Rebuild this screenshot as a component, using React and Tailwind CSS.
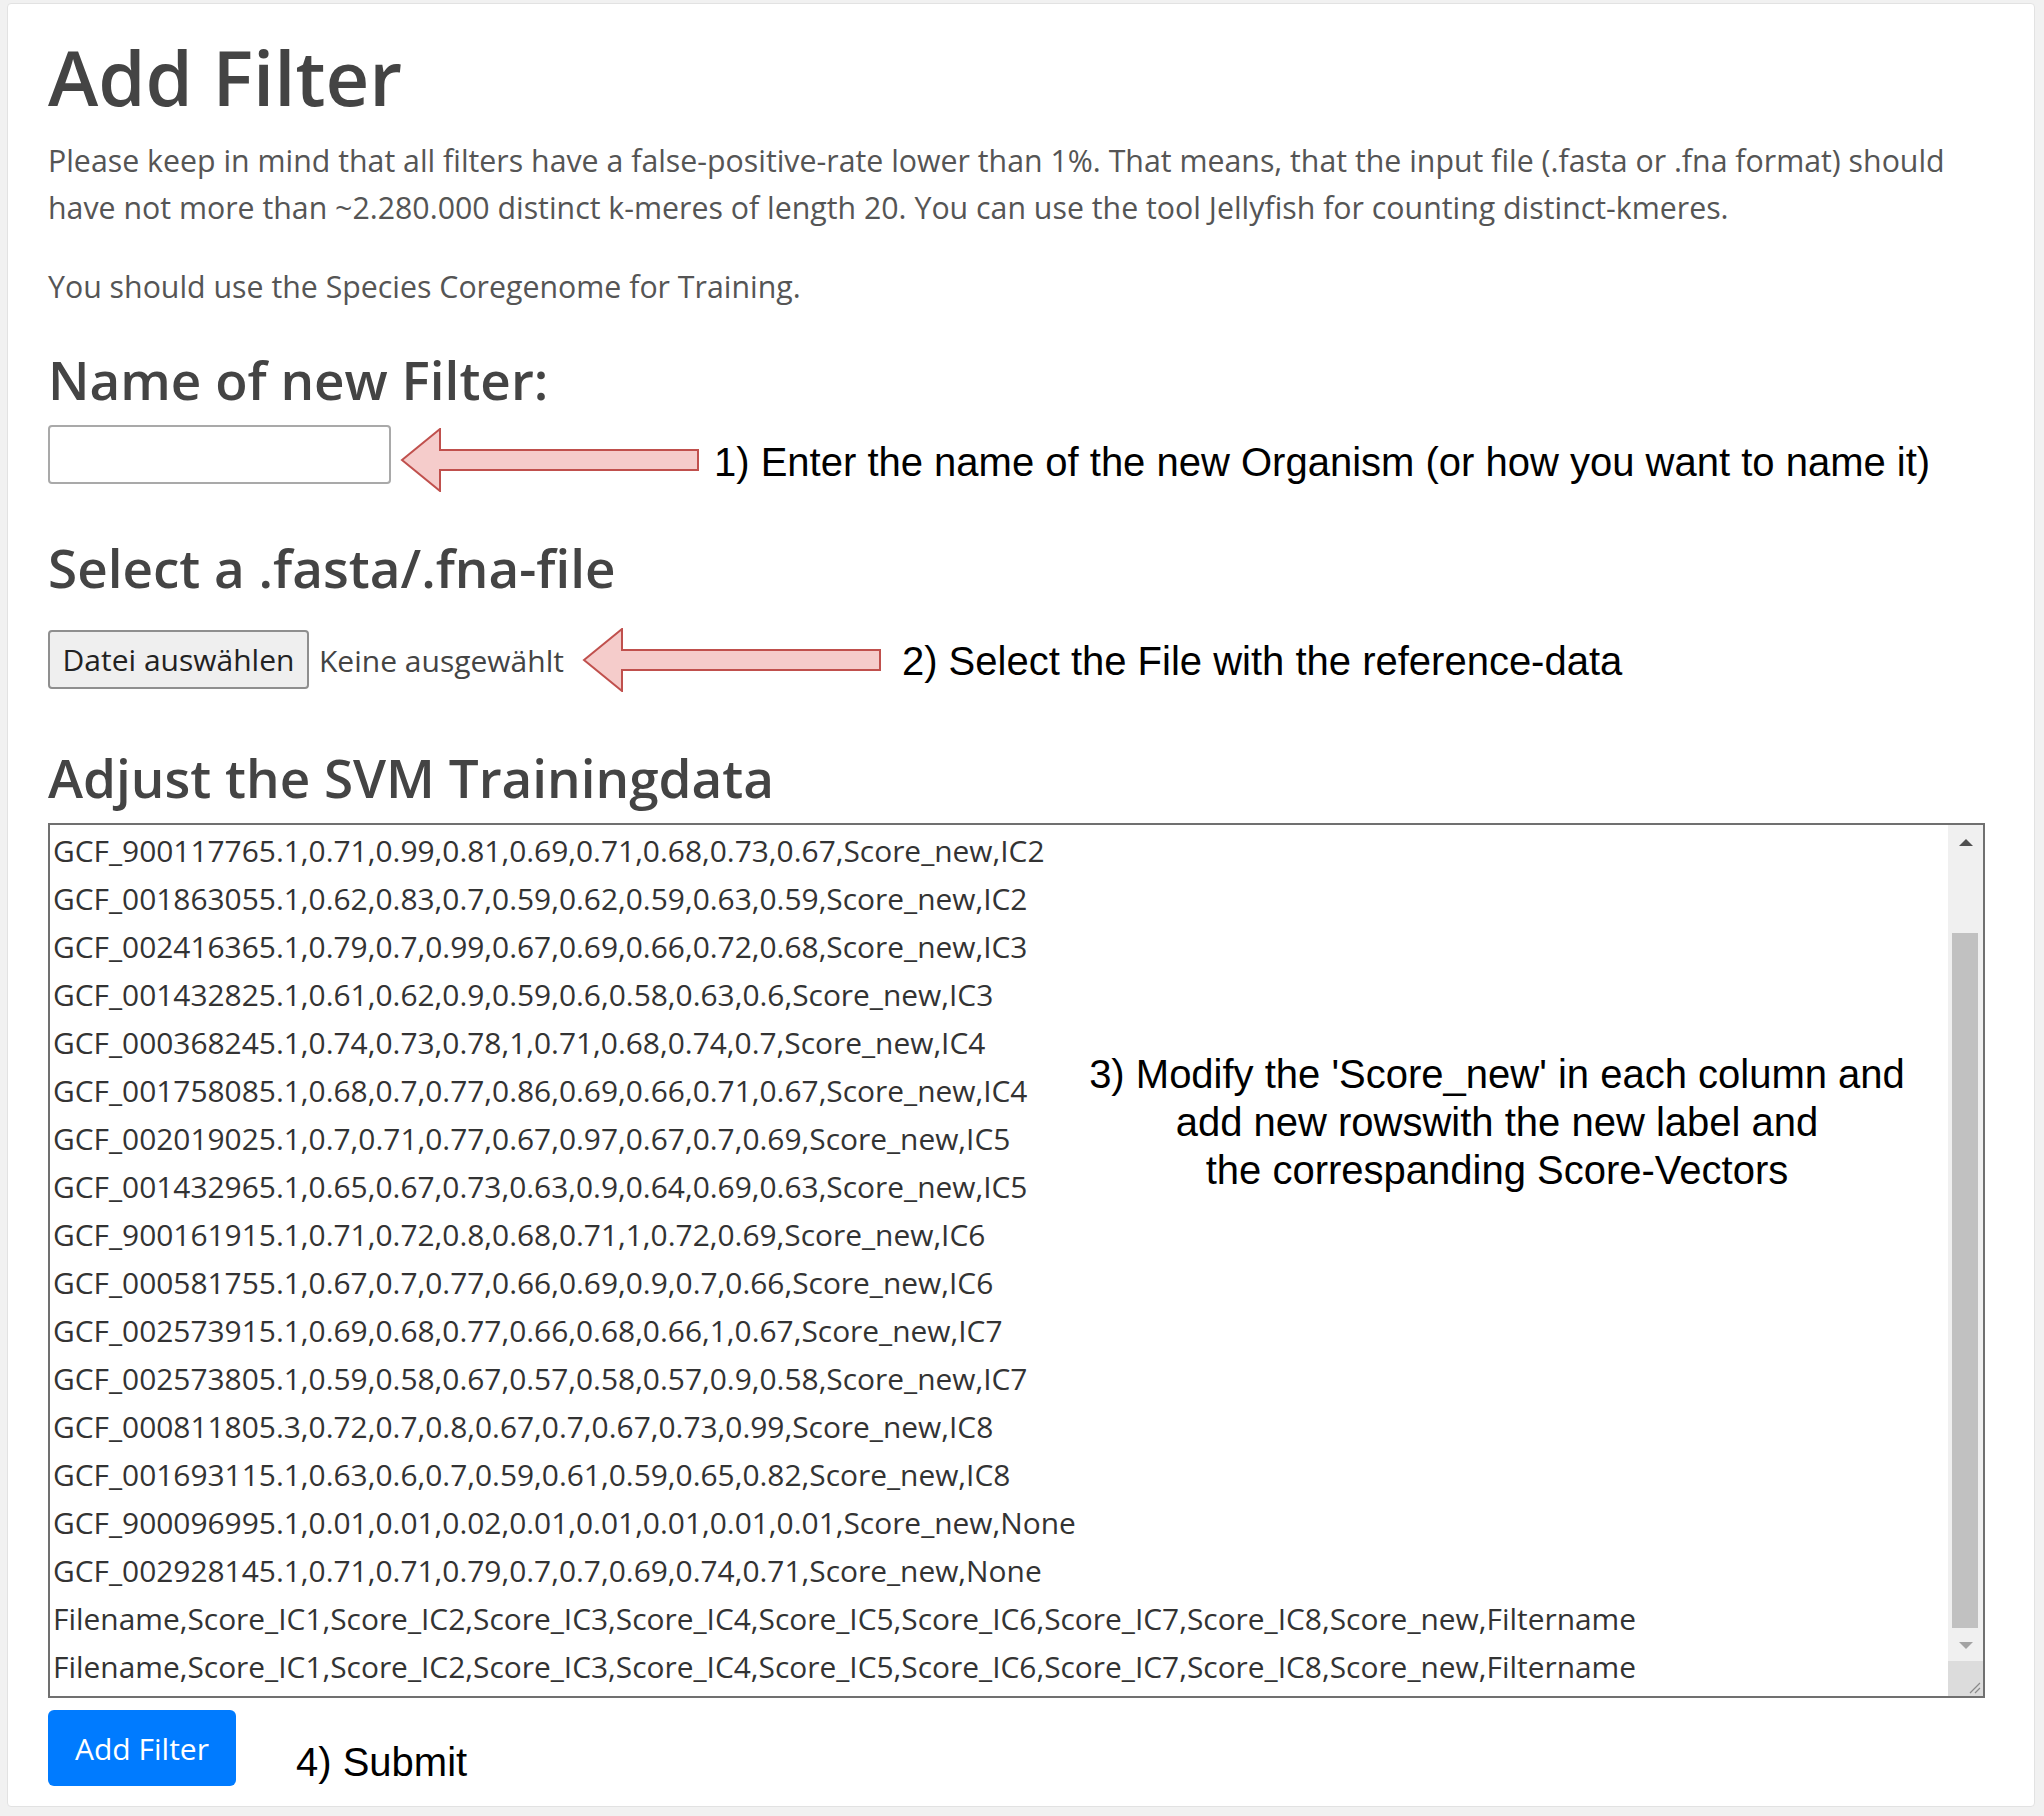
import React from 'react';

const rows = [
  'GCF_900117765.1,0.71,0.99,0.81,0.69,0.71,0.68,0.73,0.67,Score_new,IC2',
  'GCF_001863055.1,0.62,0.83,0.7,0.59,0.62,0.59,0.63,0.59,Score_new,IC2',
  'GCF_002416365.1,0.79,0.7,0.99,0.67,0.69,0.66,0.72,0.68,Score_new,IC3',
  'GCF_001432825.1,0.61,0.62,0.9,0.59,0.6,0.58,0.63,0.6,Score_new,IC3',
  'GCF_000368245.1,0.74,0.73,0.78,1,0.71,0.68,0.74,0.7,Score_new,IC4',
  'GCF_001758085.1,0.68,0.7,0.77,0.86,0.69,0.66,0.71,0.67,Score_new,IC4',
  'GCF_002019025.1,0.7,0.71,0.77,0.67,0.97,0.67,0.7,0.69,Score_new,IC5',
  'GCF_001432965.1,0.65,0.67,0.73,0.63,0.9,0.64,0.69,0.63,Score_new,IC5',
  'GCF_900161915.1,0.71,0.72,0.8,0.68,0.71,1,0.72,0.69,Score_new,IC6',
  'GCF_000581755.1,0.67,0.7,0.77,0.66,0.69,0.9,0.7,0.66,Score_new,IC6',
  'GCF_002573915.1,0.69,0.68,0.77,0.66,0.68,0.66,1,0.67,Score_new,IC7',
  'GCF_002573805.1,0.59,0.58,0.67,0.57,0.58,0.57,0.9,0.58,Score_new,IC7',
  'GCF_000811805.3,0.72,0.7,0.8,0.67,0.7,0.67,0.73,0.99,Score_new,IC8',
  'GCF_001693115.1,0.63,0.6,0.7,0.59,0.61,0.59,0.65,0.82,Score_new,IC8',
  'GCF_900096995.1,0.01,0.01,0.02,0.01,0.01,0.01,0.01,0.01,Score_new,None',
  'GCF_002928145.1,0.71,0.71,0.79,0.7,0.7,0.69,0.74,0.71,Score_new,None',
  'Filename,Score_IC1,Score_IC2,Score_IC3,Score_IC4,Score_IC5,Score_IC6,Score_IC7,Score_IC8,Score_new,Filtername',
  'Filename,Score_IC1,Score_IC2,Score_IC3,Score_IC4,Score_IC5,Score_IC6,Score_IC7,Score_IC8,Score_new,Filtername',
];

const ui = { fontFamily: '"Open Sans", "Noto Sans", sans-serif' };
const note = { fontFamily: '"Liberation Sans", Arial, sans-serif' };

// pink block arrow pointing left
const Arrow = () => (
  <svg width="300" height="64" viewBox="0 0 300 64" className="shrink-0">
    <polygon
      points="2,32 40,1 40,22 298,22 298,42 40,42 40,63"
      fill="#f5cccb"
      stroke="#c0504d"
      strokeWidth="2"
      strokeLinejoin="miter"
    />
  </svg>
);

const Note = ({ children, className = '' }) => (
  <span style={note} className={`text-[40px] leading-[46px] text-black whitespace-nowrap ${className}`}>
    {children}
  </span>
);

export default function App() {
  return (
    <div className="min-h-screen bg-[#f1f1f1] pt-[3px] pl-[7px] pr-[9px] pb-[9px]" style={ui}>
      <div className="h-[1804px] bg-white border border-[#e2e2e2] rounded-[4px] pl-[40px] pr-[48px]">
        <h1 className="mt-[26px] text-[76px] leading-[94px] font-semibold text-[#444]">Add Filter</h1>

        <p className="mt-[13px] text-[30.3px] leading-[47px] text-[#555] whitespace-nowrap">
          Please keep in mind that all filters have a false-positive-rate lower than 1%. That means, that the input file (.fasta or .fna format) should
          <br />
          have not more than ~2.280.000 distinct k-meres of length 20. You can use the tool Jellyfish for counting distinct-kmeres.
        </p>
        <p className="mt-[32px] text-[30.3px] leading-[47px] text-[#555]">You should use the Species Coregenome for Training.</p>

        <h2 className="mt-[40px] text-[53px] leading-[60px] font-semibold text-[#444]">Name of new Filter:</h2>
        <div className="mt-[15px] flex items-start">
          <input
            type="text"
            className="w-[343px] h-[59px] border-2 border-[#a9a9a9] rounded-[4px] bg-white shrink-0"
          />
          <div className="ml-[9px] mt-[3px]">
            <Arrow />
          </div>
          <Note className="ml-[14px] mt-[14px]">1) Enter the name of the new Organism (or how you want to name it)</Note>
        </div>

        <h2 className="mt-[46px] text-[53px] leading-[60px] font-semibold text-[#444]">Select a .fasta/.fna-file</h2>
        <div className="mt-[30px] flex items-start">
          <button className="mt-[2px] w-[261px] h-[59px] bg-[#efefef] border-2 border-[#8f8f8f] rounded-[4px] text-[30px] leading-[47px] text-[#222] shrink-0">
            Datei auswählen
          </button>
          <span className="ml-[10px] mt-[9px] text-[30px] leading-[47px] text-[#444] whitespace-nowrap">Keine ausgewählt</span>
          <div className="ml-[18px]">
            <Arrow />
          </div>
          <Note className="ml-[20px] mt-[10px]">2) Select the File with the reference-data</Note>
        </div>

        <h2 className="mt-[56px] text-[53px] leading-[60px] font-semibold text-[#444]">Adjust the SVM Trainingdata</h2>
        <div className="relative mt-[15px] h-[875px] w-[1937px] flex border-2 border-[#707070] bg-white">
          <div className="flex-1 pl-[3px] pt-[2px] text-[29.9px] leading-[48px] text-[#333] overflow-hidden">
            {rows.map((r, i) => (
              <div key={i} className="whitespace-nowrap">{r}</div>
            ))}
          </div>
          <div className="w-[35px] bg-[#f0f0f0] flex flex-col items-center">
            <div className="h-[108px] w-full flex justify-center pt-[14px]">
              <div className="w-0 h-0 border-l-[7px] border-r-[7px] border-b-[7px] border-l-transparent border-r-transparent border-b-[#505050]" />
            </div>
            <div className="w-[26px] h-[695px] bg-[#c1c1c1] -ml-[1px]" />
            <div className="flex-1 w-full flex justify-center pt-[14px]">
              <div className="w-0 h-0 border-l-[7px] border-r-[7px] border-t-[7px] border-l-transparent border-r-transparent border-t-[#a3a3a3]" />
            </div>
            <div className="h-[35px] w-full bg-[#dcdcdc] flex items-end justify-end p-[2px]">
              <svg width="14" height="14" viewBox="0 0 14 14">
                <path d="M13 3 L3 13 M13 8 L8 13" stroke="#8a8a8a" strokeWidth="1.2" />
              </svg>
            </div>
          </div>
          <div className="absolute left-[1037px] top-[225px] w-[820px] flex flex-col items-center">
            <Note className="leading-[48px]">3) Modify the &apos;Score_new&apos; in each column and</Note>
            <Note className="leading-[48px]">add new rowswith the new label and</Note>
            <Note className="leading-[48px]">the correspanding Score-Vectors</Note>
          </div>
        </div>

        <div className="mt-[12px] flex items-start">
          <button className="w-[188px] h-[76px] bg-[#007bff] rounded-[6px] text-white text-[30px] leading-[47px]">
            Add Filter
          </button>
          <Note className="ml-[60px] mt-[29px]">4) Submit</Note>
        </div>
      </div>
    </div>
  );
}
